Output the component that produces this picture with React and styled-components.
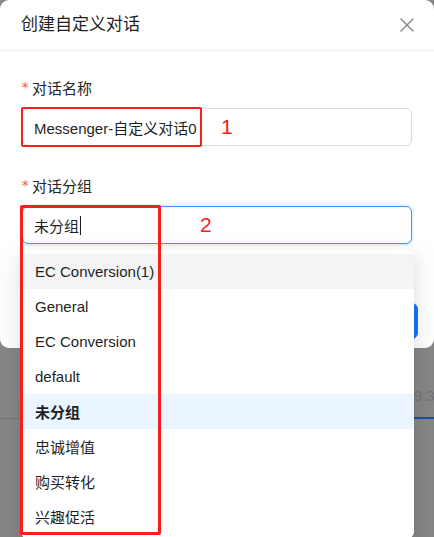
import React from 'react'
import styled, { createGlobalStyle } from 'styled-components'

const GlobalStyle = createGlobalStyle`
    html, body {
        margin: 0;
        padding: 0;
        background-color: #878787;
    }
    * {
        box-sizing: border-box;
    }
`

const Page = styled.div`
    position: relative;
    width: 434px;
    height: 537px;
    overflow: hidden;
    background-color: #878787;
    font-family: "Liberation Sans", "Noto Sans CJK SC", sans-serif;
    color: #1f1f1f;
`

const Modal = styled.div`
    position: relative;
    z-index: 2;
    width: 434px;
    background-color: #ffffff;
    border-radius: 9px;
`

const Header = styled.div`
    display: flex;
    align-items: center;
    justify-content: space-between;
    height: 51px;
    padding: 0 20px 0 21px;
    border-bottom: 1px solid #ededed;
`

const Title = styled.div`
    font-size: 17px;
    line-height: 24px;
    color: #1f1f1f;
`

const CloseButton = styled.button`
    display: flex;
    width: 14px;
    height: 14px;
    padding: 0;
    border: none;
    background: none;
    cursor: pointer;
`

const Body = styled.div`
    padding: 25px 22px 0 22px;
`

const FormItem = styled.div`
    margin-bottom: ${props => props.last ? '0' : '28px'};
`

const Label = styled.div`
    display: flex;
    align-items: center;
    height: 22px;
    margin-bottom: 10px;
    font-size: 15px;
    color: #262626;
`

const Required = styled.span`
    width: 11px;
    margin-left: -1px;
    color: #ff4d4f;
    font-size: 14px;
    font-family: "DejaVu Sans Mono", monospace;
`

const Field = styled.div`
    position: relative;
    height: 38px;
    display: flex;
    align-items: center;
    padding: 0 11px;
    border: 1px solid ${props => props.focused ? '#4096ff' : '#d9d9d9'};
    border-radius: 6px;
    box-shadow: ${props => props.focused ? '0 0 0 2px rgba(5, 145, 255, 0.1)' : 'none'};
    font-size: 15px;
    color: #1f1f1f;
    background-color: #ffffff;
`

const Caret = styled.span`
    display: inline-block;
    width: 1px;
    height: 19px;
    margin-left: 1px;
    background-color: #1f1f1f;
`

const Mark = styled.div`
    position: absolute;
    z-index: 5;
    border: ${props => props.thick ? '3px' : '2.5px'} solid #f5201a;
    border-radius: 2px;
    pointer-events: none;
`

const MarkNumber = styled.span`
    position: absolute;
    z-index: 5;
    top: 50%;
    transform: translateY(-50%);
    color: #f5201a;
    font-size: 21px;
    font-family: "Liberation Sans", sans-serif;
`

const Dropdown = styled.ul`
    position: absolute;
    z-index: 4;
    top: 43px;
    left: -2px;
    width: 393px;
    margin: 0;
    padding: 4px 0;
    list-style-type: none;
    background-color: #ffffff;
    border-radius: 6px;
    box-shadow: 0 6px 16px 0 rgba(0, 0, 0, 0.08), 0 3px 6px -4px rgba(0, 0, 0, 0.12), 0 9px 28px 8px rgba(0, 0, 0, 0.05);
`

const Option = styled.li`
    display: flex;
    align-items: center;
    height: 35px;
    padding: 0 14px;
    font-size: 15px;
    color: #1f1f1f;
    font-weight: ${props => props.selected ? 700 : 400};
    background-color: ${props => props.selected ? '#eaf5ff' : props.active ? '#f4f4f4' : 'transparent'};
`

const Footer = styled.div`
    display: flex;
    justify-content: flex-end;
    gap: 8px;
    padding: 59px 16px 9px 22px;
`

const Button = styled.button`
    height: 36px;
    padding: 0 16px;
    border-radius: 6px;
    font-size: 15px;
    border: 1px solid ${props => props.primary ? '#1677ff' : '#d9d9d9'};
    background-color: ${props => props.primary ? '#1677ff' : '#ffffff'};
    color: ${props => props.primary ? '#ffffff' : '#1f1f1f'};
`

const Behind = styled.div`
    display: flex;
    justify-content: flex-end;
    align-items: center;
    height: 72px;
    margin-top: -1px;
    padding-top: 26px;
    border-bottom: 1px solid #757575;
    position: relative;
`

const BehindTime = styled.span`
    width: 20px;
    overflow: hidden;
    white-space: nowrap;
    font-size: 15px;
    color: #747474;
`

const BehindTab = styled.div`
    position: absolute;
    right: 0;
    bottom: -1px;
    width: 21px;
    height: 2px;
    background-color: #1c4fae;
`

const groups = ['EC Conversion(1)', 'General', 'EC Conversion', 'default', '未分组', '忠诚增值', '购买转化', '兴趣促活']

function CloseIcon() {
    return (
        <svg width="14" height="14" viewBox="0 0 14 14">
            <path d="M1 1 L13 13 M13 1 L1 13" stroke="#8c8c8c" strokeWidth="1.5" strokeLinecap="round" />
        </svg>
    )
}

export default function App() {
    return (
        <Page>
            <GlobalStyle />
            <Modal>
                <Header>
                    <Title>创建自定义对话</Title>
                    <CloseButton><CloseIcon /></CloseButton>
                </Header>
                <Body>
                    <FormItem>
                        <Label><Required>*</Required>对话名称</Label>
                        <Field>
                            Messenger-自定义对话0
                            <Mark style={{ left: '-2px', top: '-2px', width: '181px', height: '40px' }} />
                            <MarkNumber style={{ left: '198px' }}>1</MarkNumber>
                        </Field>
                    </FormItem>
                    <FormItem last>
                        <Label><Required>*</Required>对话分组</Label>
                        <Field focused>
                            未分组<Caret />
                            <MarkNumber style={{ left: '177px' }}>2</MarkNumber>
                            <Mark thick style={{ left: '-3px', top: '-2px', width: '141px', height: '330px' }} />
                            <Dropdown>
                                {groups.map((name, i) => (
                                    <Option key={name} active={i === 0} selected={name === '未分组'}>{name}</Option>
                                ))}
                            </Dropdown>
                        </Field>
                    </FormItem>
                </Body>
                <Footer>
                    <Button>取消</Button>
                    <Button primary>确定</Button>
                </Footer>
            </Modal>
            <Behind>
                <BehindTime>9:30</BehindTime>
                <BehindTab />
            </Behind>
        </Page>
    )
}
